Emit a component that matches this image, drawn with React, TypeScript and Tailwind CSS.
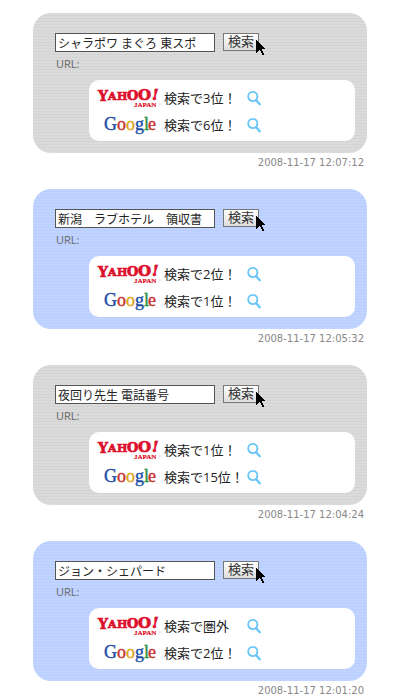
import type { ReactNode } from 'react';

interface Entry {
  keyword: string;
  yahoo: string;
  google: string;
  date: string;
}

const entries: Entry[] = [
  { keyword: 'シャラポワ まぐろ 東スポ', yahoo: '検索で3位！', google: '検索で6位！', date: '2008-11-17 12:07:12' },
  { keyword: '新潟　ラブホテル　領収書', yahoo: '検索で2位！', google: '検索で1位！', date: '2008-11-17 12:05:32' },
  { keyword: '夜回り先生 電話番号', yahoo: '検索で1位！', google: '検索で15位！', date: '2008-11-17 12:04:24' },
  { keyword: 'ジョン・シェパード', yahoo: '検索で圏外', google: '検索で2位！', date: '2008-11-17 12:01:20' },
];

function YahooLogo() {
  return (
    <svg viewBox="0 0 62 20" className="h-5 w-[62px] overflow-visible" role="img" aria-label="Yahoo! Japan">
      <g fill="#dc0f2c" stroke="#dc0f2c">
        <text strokeWidth="0.7" fontWeight="bold" fontFamily="'DejaVu Serif', serif">
          <tspan x="-1" y="12" fontSize="14">Y</tspan>
          <tspan x="9" y="11" fontSize="11">A</tspan>
          <tspan x="18" y="11" fontSize="11">H</tspan>
          <tspan x="28" y="11" fontSize="13">O</tspan>
          <tspan x="39" y="11" fontSize="15">O</tspan>
          <tspan x="53" y="11" fontSize="15" fontStyle="italic">!</tspan>
        </text>
        <text x="35" y="18" fontSize="7" strokeWidth="0.2" fontWeight="bold" fontFamily="'Liberation Serif', serif">JAPAN</text>
      </g>
      <circle cx="61" cy="15" r="0.6" fill="#e58a94" />
    </svg>
  );
}

function GoogleLogo() {
  return (
    <svg viewBox="0 0 52 20" className="h-5 w-[52px] overflow-visible" role="img" aria-label="Google">
      <text y="14" fontSize="18" fontFamily="'Liberation Serif', serif" strokeWidth="0.4">
        <tspan x="0" fill="#1d4fa5" stroke="#1d4fa5">G</tspan>
        <tspan x="13" fill="#c9302c" stroke="#c9302c">o</tspan>
        <tspan x="22" fill="#d9a514" stroke="#d9a514">o</tspan>
        <tspan x="31" fill="#1d4fa5" stroke="#1d4fa5">g</tspan>
        <tspan x="40" fill="#27913c" stroke="#27913c">l</tspan>
        <tspan x="44" fill="#c9302c" stroke="#c9302c">e</tspan>
      </text>
    </svg>
  );
}

function SearchIcon() {
  return (
    <svg viewBox="0 0 14 15" className="h-[15px] w-[14px]" fill="none" stroke="#6ac6f8" aria-hidden="true">
      <circle cx="5.8" cy="5.5" r="4.6" strokeWidth="1.8" />
      <path d="M9.2 9.2l3.5 4" strokeWidth="2.3" strokeLinecap="round" />
    </svg>
  );
}

function Cursor() {
  return (
    <svg viewBox="0 0 10 18" className="pointer-events-none absolute top-[7px] left-[33px] h-[18px] w-[10px]" aria-hidden="true">
      <path d="M0 0h1v1h1v1h1v1h1v1h1v1h1v1h1v1h1v1h1v1H6v2h1v2h1v2H6v-2H5v-2H4v-1H3v1H2v1H1v1H0z" />
    </svg>
  );
}

function Rank({ logo, text }: { logo: ReactNode; text: string }) {
  return (
    <div className="flex h-[27px] items-center">
      <div className="flex w-[66px] justify-center">{logo}</div>
      <span className="w-[84px] pl-px text-[13px] whitespace-nowrap text-[#222]">{text}</span>
      <a href="#" aria-label="検索結果">
        <SearchIcon />
      </a>
    </div>
  );
}

function Card({ entry, blue }: { entry: Entry; blue: boolean }) {
  const stripes = blue
    ? 'bg-[repeating-linear-gradient(to_bottom,#c0d4ff_0px,#c0d4ff_2px,#b7ceff_2px,#b7ceff_3px)]'
    : 'bg-[repeating-linear-gradient(to_bottom,#dbdbdb_0px,#dbdbdb_2px,#d3d3d3_2px,#d3d3d3_3px)]';
  return (
    <article className="mb-[18px]">
      <div className={`rounded-[18px] pt-5 pr-3 pb-3 pl-[22px] ${stripes}`}>
        <form className="flex items-start gap-2" onSubmit={(e) => e.preventDefault()}>
          <input
            aria-label="キーワード"
            defaultValue={entry.keyword}
            className="h-[19px] w-40 border border-[#555] bg-white px-[2px] text-xs text-[#222] outline-none"
          />
          <div className="relative">
            <button className="flex h-[18px] w-9 items-center justify-center border border-[#777] bg-linear-to-b from-white to-[#ddd] text-[13px] text-[#333]">
              検索
            </button>
            <Cursor />
          </div>
        </form>
        <p className="mt-1 pl-px text-[11px] leading-4 text-[#666]">URL:</p>
        <div className="mt-2 ml-[34px] rounded-[10px] bg-white px-2 pt-[5px] pb-[2px]">
          <Rank logo={<YahooLogo />} text={entry.yahoo} />
          <Rank logo={<GoogleLogo />} text={entry.google} />
        </div>
      </div>
      <time className="mt-[2px] mr-[3px] block text-right font-['DejaVu_Sans',sans-serif] text-[10px] leading-4 text-[#888]">
        {entry.date}
      </time>
    </article>
  );
}

export default function App() {
  return (
    <main className="bg-white pt-[13px] pr-[46px] pl-[33px] font-['Open_Sans','Noto_Sans_CJK_JP',sans-serif]">
      {entries.map((entry, i) => (
        <Card key={entry.date} entry={entry} blue={i % 2 === 1} />
      ))}
    </main>
  );
}
